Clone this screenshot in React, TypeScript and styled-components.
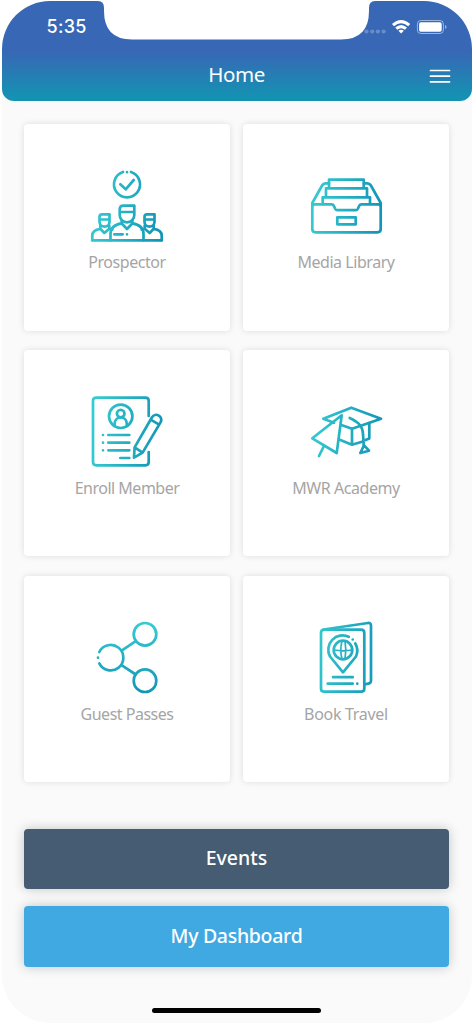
import React from 'react';
import styled, { createGlobalStyle } from 'styled-components';

const GlobalStyle = createGlobalStyle`
	* {
		box-sizing: border-box;
	}
	body {
		margin: 0;
		background: white;
		font-family: "Noto Sans", sans-serif;
	}
`;

const Wrapper = styled.div`
	padding: 1px 1.5px;
	width: 473px;
	height: 1024px;
	overflow: hidden;
`;

const Screen = styled.div`
	height: 1021.5px;
	background: #fafafa;
	border-radius: 48px;
	overflow: hidden;
	display: flex;
	flex-direction: column;
	align-items: center;
`;

const Header = styled.header`
	position: relative;
	width: 100%;
	height: 100px;
	flex: none;
	background: linear-gradient(#3867b5 0, #3867b5 50%, #1492b3 96%);
	border-radius: 0 0 12px 12px;
	color: white;
`;

const Notch = styled.svg`
	position: absolute;
	top: -1px;
	left: 96.5px;
	width: 277px;
	height: 40px;
`;

const StatusBar = styled.div`
	height: 50px;
	padding: 2px 23.5px 0 45px;
	display: flex;
	justify-content: space-between;
	align-items: center;
	> .time {
		font: 500 18px/24px Inter, sans-serif;
		letter-spacing: 0.3px;
	}
`;

const TitleBar = styled.div`
	height: 50px;
	padding: 0 21px;
	display: grid;
	grid-template-columns: 22px 1fr 22px;
	align-items: center;
	> .title {
		text-align: center;
		font-size: 20.5px;
		line-height: 28px;
		margin-top: -4px;
		letter-spacing: -0.4px;
	}
`;

const Grid = styled.div`
	display: grid;
	grid-template-columns: 206px 206px;
	grid-auto-rows: 206.5px;
	gap: 19.3px 13px;
	margin-top: 23px;
`;

const Card = styled.div`
	background: white;
	border-radius: 4px;
	box-shadow: 0 0 6px rgba(0, 0, 0, 0.12);
	display: flex;
	flex-direction: column;
	align-items: center;
	padding-top: 44px;
	> svg {
		width: 76px;
		height: 76px;
		flex: none;
		fill: none;
		stroke-width: 2.7;
		stroke-linecap: round;
		stroke-linejoin: round;
	}
`;

const Label = styled.span<{ $spacing: number }>`
	margin-top: 6px;
	color: #a5a5a5;
	font-size: 16px;
	line-height: 24px;
	letter-spacing: ${(props) => props.$spacing}px;
	white-space: nowrap;
`;

const Actions = styled.div`
	display: flex;
	flex-direction: column;
	gap: 17px;
	margin-top: 46.5px;
`;

const Action = styled.button<{ $color: string; $spacing: number }>`
	width: 425px;
	height: 60.5px;
	padding: 0 0 2px;
	border: 0;
	border-radius: 4px;
	background: ${(props) => props.$color};
	box-shadow: 0 0 12px rgba(0, 0, 0, 0.22);
	color: white;
	font-family: "Noto Sans", sans-serif;
	font-size: 19.5px;
	font-weight: 500;
	letter-spacing: ${(props) => props.$spacing}px;
`;

const HomeIndicator = styled.div`
	width: 169px;
	height: 5.5px;
	border-radius: 3px;
	background: black;
	margin-top: 41px;
`;

const ProspectorIcon = () => (
	<>
		<path d="M34 4A13 13 0 1 0 42 4M31.3 16.3l5.4 5L44.7 12" />
		<path d="M38 4.2h.01M25.3 66.3h8.4M38 66.3h.01" />
		<path d="M3.3 72.3h69.4" />
		<path d="M34.5 37.7h10.8V47c0 4.3-3.2 7.3-7.3 7.3s-7.3-3-7.3-7.3v-5.5q0-3.8 3.8-3.8zM30.7 44h14.6" />
		<path d="M32.7 52.5v3L38 61l5.3-5.5v-3M32.7 55.3C25 56.5 21.5 60.5 21.5 66v6.3M43.3 55.3C51 56.5 54.5 60.5 54.5 66v6.3" />
		<path d="M13 46.4h7.5v7.3c0 3-2.2 4.9-5 4.9s-5-1.9-5-4.9v-4.8q0-2.5 2.5-2.5zM10.5 51.5h10" />
		<path d="M11.3 57.5v3.3l4 4.2 5-4.2v-3.3M11.3 60.8Q3.3 62 3.3 67.5v4.8M20.3 60.8l3 .8" />
		<path d="M58 46.4h7.5v7.3c0 3-2.2 4.9-5 4.9s-5-1.9-5-4.9v-4.8q0-2.5 2.5-2.5zM55.5 51.5h10" />
		<path d="M55.7 57.5v3.3l5 4.2 4-4.2v-3.3M64.7 60.8q8 1.2 8 6.7v4.8M55.7 60.8l-3 .8" />
	</>
);

const LibraryIcon = () => (
	<>
		<path d="M6.5 36.3h17.2q1.4 0 2 1.3l1.6 3.4q.6 1.2 2 1.2h18.4q1.4 0 2-1.2l1.6-3.4q.6-1.3 2-1.3h17.2q2.2 0 2.2 2.2V61q0 3.3-3.3 3.3H7.6q-3.3 0-3.3-3.3V38.5q0-2.2 2.2-2.2z" />
		<path d="M4.3 38V35l9.8-17.5q1.2-2.2 3.5-2.2H21M72.7 38V35l-9.8-17.5q-1.2-2.2-3.5-2.2H56" />
		<path d="M21 20.3v-8.6h34.7v8.6M18 29.3v-9h41v9M14.7 36v-6.7h47.3V36" />
		<path d="M29.3 49.3h18.4v7H29.3z" />
	</>
);

const EnrollIcon = () => (
	<>
		<path d="M59.7 22V7q0-3.3-3.3-3.3h-49Q4 3.7 4 7v61q0 3.3 3.4 3.3h49q3.3 0 3.3-3.3V58" />
		<circle cx="31.7" cy="22.3" r="11.7" />
		<circle cx="31.7" cy="19.6" r="3.8" />
		<path d="M25.6 31.5v-1.4c0-4 2.4-6.6 6.1-6.6s6.1 2.6 6.1 6.6v1.4" />
		<path d="M19.3 41h21M19.3 48.7h21M19.3 56.3h21M31.3 64h9M14 41h.01M14 48.7h.01M14 56.3h.01" />
		<path d="M45.6 53.4L63 23.3c1.6-2.6 4.5-3 6.8-1.7s3.3 4.2 1.7 6.8L53.6 58.6 45 63.7zM61.7 25.7l8 4.6M45.6 53.4l8 5.2" />
	</>
);

const AcademyIcon = () => (
	<>
		<path d="M26 28.7L15.3 24.7 43.3 13.7 73 24.7 44 34.7 34 31.2" />
		<path d="M33.7 21.3L4.3 44.3 28.7 59zM15.7 52.5L11 62" />
		<path d="M31.8 45.8L44 50.7l10-3M57.5 46l3.8-1.6V29M44 34.7v16" />
		<path d="M41.7 24C49 27.5 54.5 31 55 40l.7 11" />
		<path d="M56 51.3L52.3 59l8.7-2.3z" />
	</>
);

const ShareIcon = () => (
	<>
		<circle cx="56" cy="14.3" r="11.3" />
		<circle cx="56" cy="60.7" r="11.3" />
		<path d="M10.3 32A12.7 12.7 0 1 1 10.3 43.4M33 30.3L46 21.7M32.5 45.2L46 54M9 37.7h.01" />
	</>
);

const TravelIcon = () => (
	<>
		<path d="M16.3 9.7h36.7q3.3 0 3.3 3.3v55.4q0 3.3-3.3 3.3H16.3q-3.3 0-3.3-3.3V13q0-3.3 3.3-3.3z" />
		<path d="M15.5 9.5L60 3q3-.3 3 2.8v54.7q0 2.8-2.7 3.2l-4 .6" />
		<path d="M40.7 16.8A14.3 14.3 0 0 0 22 36.5L35 52.3 48 36.5a14.3 14.3 0 0 0-.7-13" />
		<circle cx="35" cy="30" r="9.3" />
		<path d="M26 30q9 1.6 18 0M34 21q-2.4 9 0 18M37 21q1.6 9 0 18" strokeWidth="1.7" />
		<path d="M44.7 19.5h.01M25 57.2h19.7M19.7 63.7h25M49.3 63.7h.01" />
	</>
);

const items = [
	{ id: 'prospector', label: 'Prospector', spacing: -0.45, icon: <ProspectorIcon /> },
	{ id: 'library', label: 'Media Library', spacing: -0.45, icon: <LibraryIcon /> },
	{ id: 'enroll', label: 'Enroll Member', spacing: -0.5, icon: <EnrollIcon /> },
	{ id: 'academy', label: 'MWR Academy', spacing: -0.45, icon: <AcademyIcon /> },
	{ id: 'guest', label: 'Guest Passes', spacing: -0.5, icon: <ShareIcon />, vertical: true },
	{ id: 'travel', label: 'Book Travel', spacing: -0.3, icon: <TravelIcon /> },
];

const App: React.FC = () => {
	return (
		<Wrapper>
			<GlobalStyle />
			<Screen>
				<Header>
					<Notch viewBox="0 0 277 40">
						<path fill="white" d="M0 0v1q6 0 6 7v3q0 28.5 28 28.5h209q28 0 28-28.5V8q0-7 6-7V0z" />
					</Notch>
					<StatusBar>
						<span className="time">5:35</span>
						<svg width="84" height="16" viewBox="0 0 84 16" fill="white">
							<g opacity=".25">
								<circle cx="2.5" cy="12.5" r="2.1" />
								<circle cx="8.2" cy="12.5" r="2.1" />
								<circle cx="13.9" cy="12.5" r="2.1" />
								<circle cx="19.6" cy="12.5" r="2.1" />
							</g>
							<path d="M28 5.1q9.1-8.2 18.2 0l-2 2.2q-7.1-6.1-14.2 0zM31.2 8.5q5.9-5 11.8 0l-2.1 2.2q-3.8-3-7.6 0zM34.4 11.8q2.7-2.1 5.4 0l-2.7 2.8z" />
							<rect x="53.4" y="1.5" width="26" height="13" rx="3.5" fill="none" stroke="white" opacity=".5" />
							<rect x="55.1" y="3.2" width="22.6" height="9.6" rx="1.8" />
							<path d="M81 6v4q1.6-.7 1.6-2T81 6z" opacity=".5" />
						</svg>
					</StatusBar>
					<TitleBar>
						<span />
						<span className="title">Home</span>
						<svg width="22" height="16" viewBox="0 0 22 16" stroke="white" strokeWidth="1.7" strokeLinecap="round">
							<path d="M1.5 2.5h19M1.5 8.2h19M1.5 13.9h19" />
						</svg>
					</TitleBar>
				</Header>
				<Grid>
					{items.map((item) => (
						<Card key={item.id}>
							<svg viewBox="0 0 76 76" stroke={`url(#${item.id})`}>
								<defs>
									<linearGradient
										id={item.id}
										gradientUnits="userSpaceOnUse"
										x1={item.vertical ? 38 : 3}
										y1={item.vertical ? 3 : 34}
										x2={item.vertical ? 38 : 73}
										y2={item.vertical ? 73 : 42}
									>
										<stop stopColor="#35cbd0" />
										<stop offset="1" stopColor="#1395b6" />
									</linearGradient>
								</defs>
								{item.icon}
							</svg>
							<Label $spacing={item.spacing}>{item.label}</Label>
						</Card>
					))}
				</Grid>
				<Actions>
					<Action $color="#455c72" $spacing={0}>Events</Action>
					<Action $color="#40a9e2" $spacing={-0.3}>My Dashboard</Action>
				</Actions>
				<HomeIndicator />
			</Screen>
		</Wrapper>
	);
};
export default App;
